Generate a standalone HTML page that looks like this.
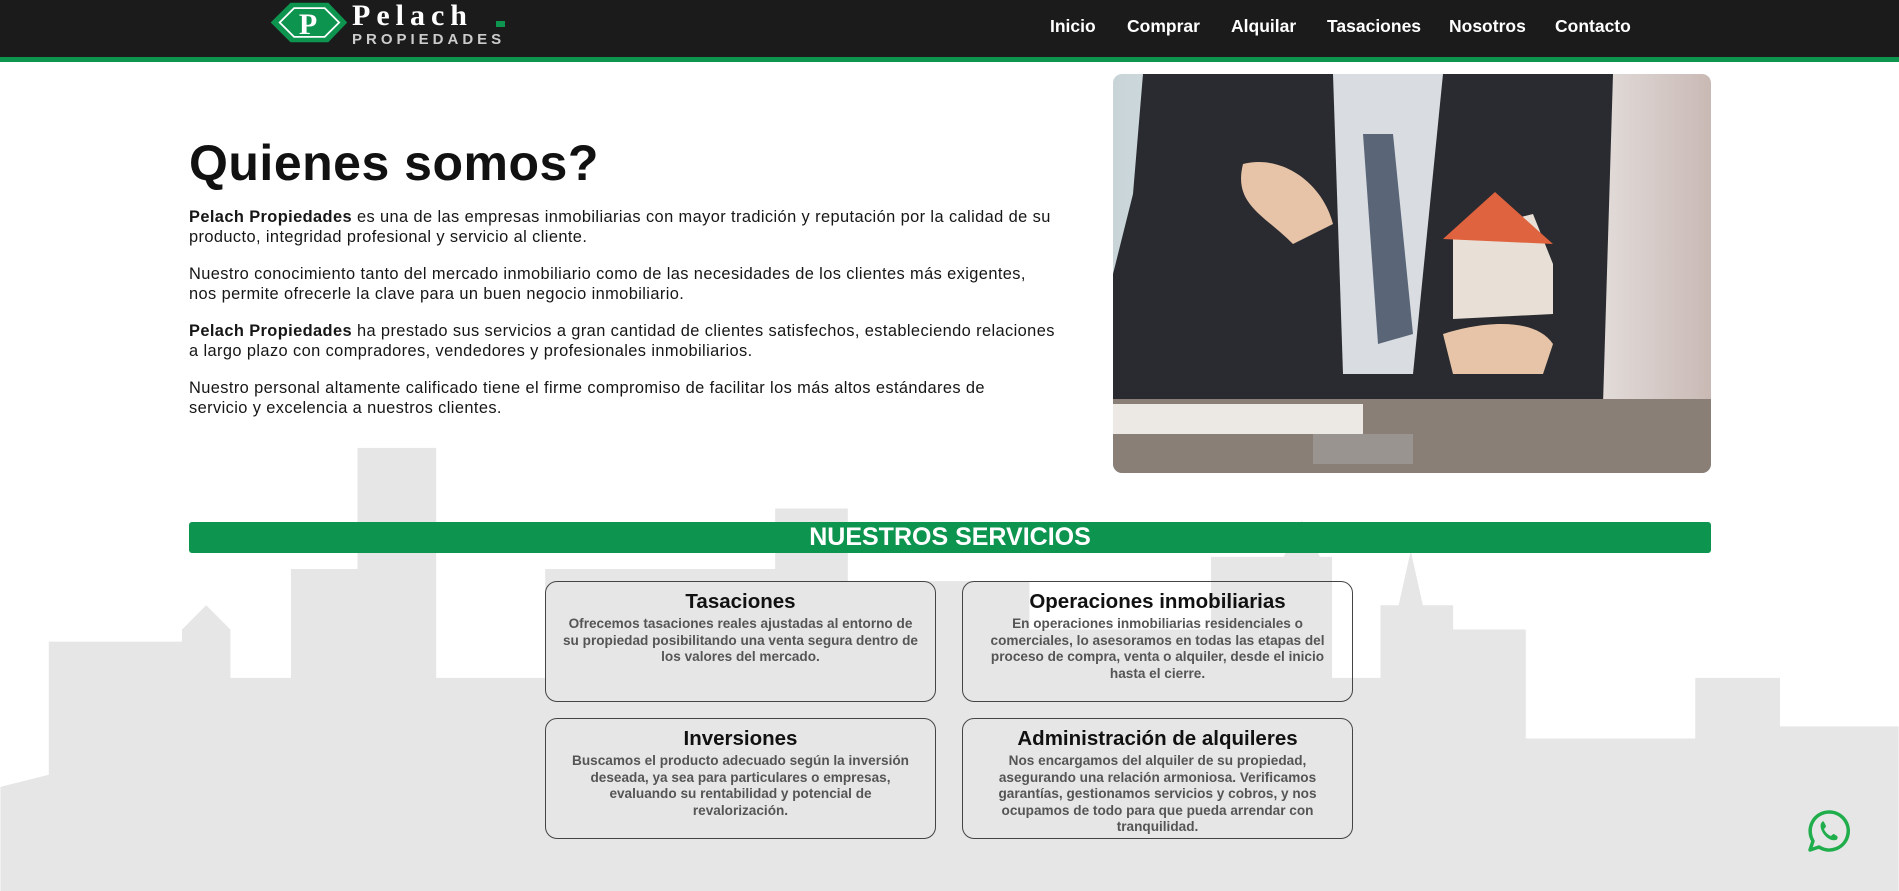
<!DOCTYPE html>
<html><head><meta charset="utf-8"><style>
*{margin:0;padding:0;box-sizing:border-box}
body{width:1899px;height:891px;overflow:hidden;background:#fff;font-family:"Liberation Sans",sans-serif;position:relative;color:#111}
.hdr{position:absolute;left:0;top:0;width:1899px;height:57px;background:#1b1b1b;border-bottom:5px solid #0d9550;box-sizing:content-box}
.nav{position:absolute;top:16px;font-weight:bold;font-size:17.5px;color:#fff}
.sky{position:absolute;left:0;top:0}
h1{position:absolute;left:189px;top:134px;font-size:50px;font-weight:bold;letter-spacing:0.5px}
.p{position:absolute;left:189px;width:900px;font-size:16.4px;line-height:20px;color:#161616;letter-spacing:0.4px}
.photo{position:absolute;left:1113px;top:74px;width:598px;height:399px;border-radius:9px;overflow:hidden;background:linear-gradient(90deg,#c8d4d8,#e8eef0 40%,#f2f2f0 70%,#c9b9b5)}
.bar{position:absolute;left:189px;top:522px;width:1522px;height:31px;background:#0d9550;border-radius:3px;color:#fff;font-weight:bold;font-size:25px;text-align:center;line-height:31px}
.card{position:absolute;width:391px;height:121px;border:1.5px solid #444;border-radius:12px;text-align:center;padding-top:8px}
.card h3{font-size:20.5px;font-weight:bold;color:#111;margin-bottom:2px}
.card p{font-size:13.6px;line-height:16.5px;color:#555;padding:0 14px;font-weight:bold}
</style></head><body>
<svg class="sky" width="1899" height="891" viewBox="0 0 1568 736"><path fill="#e6e6e6" d="M0,736 L0,650 L40,640 L40,530 L150,530 L150,520 L170,500 L190,520 L190,560 L240,560 L240,470 L295,470 L295,370 L360,370 L360,560 L450,560 L450,470 L640,470 L640,420 L700,420 L700,480 L850,480 L850,520 L1000,520 L1000,460 L1060,460 L1075,430 L1090,460 L1100,460 L1100,560 L1140,560 L1140,500 L1155,500 L1165,455 L1175,500 L1200,500 L1200,520 L1260,520 L1260,610 L1400,610 L1400,560 L1470,560 L1470,600 L1568,600 L1568,736 Z"/></svg>
<div class="hdr"></div>
<svg style="position:absolute;left:268px;top:0" width="250" height="50" viewBox="0 0 250 50">
<polygon points="0,23 22,1 64,1 85,23 64,45 22,45" fill="#0d9550" transform="scale(0.9) translate(3,2)"/>
<polygon points="10,23 26,7 60,7 76,23 60,39 26,39" fill="none" stroke="#fff" stroke-width="2" transform="scale(0.9) translate(3,2)"/>
<text x="40" y="34" font-family="Liberation Serif" font-weight="bold" font-size="30" fill="#fff" text-anchor="middle">P</text>
<text x="84" y="25" font-family="Liberation Serif" font-weight="bold" font-size="30" fill="#fff" letter-spacing="6">Pelach</text>
<rect x="228" y="21" width="9" height="6" fill="#0d9550"/>
<text x="84" y="44" font-family="Liberation Sans" font-weight="bold" font-size="15" fill="#ccc" letter-spacing="4">PROPIEDADES</text>
</svg>
<div class="nav" style="left:1050px">Inicio</div>
<div class="nav" style="left:1127px">Comprar</div>
<div class="nav" style="left:1231px">Alquilar</div>
<div class="nav" style="left:1327px">Tasaciones</div>
<div class="nav" style="left:1449px">Nosotros</div>
<div class="nav" style="left:1555px">Contacto</div>
<h1>Quienes somos?</h1>
<div class="p" style="top:207px"><b>Pelach Propiedades</b> es una de las empresas inmobiliarias con mayor tradición y reputación por la calidad de su producto, integridad profesional y servicio al cliente.</div>
<div class="p" style="top:264px">Nuestro conocimiento tanto del mercado inmobiliario como de las necesidades de los clientes más exigentes,<br>nos permite ofrecerle la clave para un buen negocio inmobiliario.</div>
<div class="p" style="top:321px"><b>Pelach Propiedades</b> ha prestado sus servicios a gran cantidad de clientes satisfechos, estableciendo relaciones<br>a largo plazo con compradores, vendedores y profesionales inmobiliarios.</div>
<div class="p" style="top:378px">Nuestro personal altamente calificado tiene el firme compromiso de facilitar los más altos estándares de<br>servicio y excelencia a nuestros clientes.</div>
<div class="photo"><svg width="598" height="399" viewBox="0 0 598 399">
<path d="M30,0 L500,0 L490,330 L0,340 L0,200 L20,120 Z" fill="#2a2b30"/>
<path d="M220,0 L330,0 L300,300 L230,300 Z" fill="#d9dde2"/>
<path d="M250,60 L280,60 L300,260 L265,270 Z" fill="#5a6678"/>
<path d="M130,90 C170,80 210,110 220,150 L180,170 C150,140 120,130 130,90 Z" fill="#e7c4a8"/>
<path d="M330,260 C360,250 420,240 440,270 L430,300 L340,300 Z" fill="#e7c4a8"/>
<rect x="0" y="325" width="598" height="74" fill="#8a7f76"/>
<rect x="0" y="330" width="250" height="30" fill="#ece9e4"/>
<path d="M340,160 L420,140 L440,190 L440,240 L340,245 Z" fill="#e8e0d6"/><path d="M330,165 L382,118 L440,170 Z" fill="#e0633f"/>
<rect x="200" y="360" width="100" height="30" fill="#9a9490"/>
</svg></div>
<div class="bar">NUESTROS SERVICIOS</div>
<div class="card" style="left:545px;top:581px"><h3>Tasaciones</h3><p>Ofrecemos tasaciones reales ajustadas al entorno de su propiedad posibilitando una venta segura dentro de los valores del mercado.</p></div>
<div class="card" style="left:962px;top:581px"><h3>Operaciones inmobiliarias</h3><p>En operaciones inmobiliarias residenciales o comerciales, lo asesoramos en todas las etapas del proceso de compra, venta o alquiler, desde el inicio hasta el cierre.</p></div>
<div class="card" style="left:545px;top:718px"><h3>Inversiones</h3><p>Buscamos el producto adecuado según la inversión deseada, ya sea para particulares o empresas, evaluando su rentabilidad y potencial de revalorización.</p></div>
<div class="card" style="left:962px;top:718px"><h3>Administración de alquileres</h3><p>Nos encargamos del alquiler de su propiedad, asegurando una relación armoniosa. Verificamos garantías, gestionamos servicios y cobros, y nos ocupamos de todo para que pueda arrendar con tranquilidad.</p></div>
<svg style="position:absolute;left:1807px;top:809px" width="44" height="44" viewBox="0 0 44 44">
<path d="M22,3 A19,19 0 1 1 12,38 L3,41 L6,32 A19,19 0 0 1 22,3 Z" fill="none" stroke="#1fae4b" stroke-width="3.5" stroke-linejoin="round"/>
<path d="M15,13 C13,15 13,19 16,24 C20,30 25,32 29,31 C31,30 31,28 30,27 L27,25 C26,25 25,26 24,27 C21,26 18,23 17,20 C18,19 19,18 19,17 L17,13 C16,12 16,12 15,13 Z" fill="#1fae4b"/>
</svg>
</body></html>
